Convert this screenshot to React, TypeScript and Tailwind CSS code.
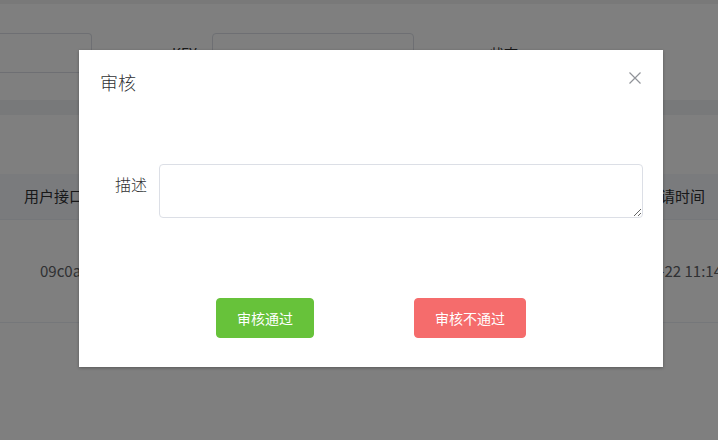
import React from "react";

export default function App() {
  return (
    <div
      className="relative w-[718px] h-[440px] overflow-hidden bg-white text-[#606266]"
      style={{ fontFamily: '"Noto Sans CJK SC", "Noto Sans", sans-serif' }}
    >
      {/* background page */}
      <div className="h-[4px] bg-[#f2f2f2]" />
      <div className="mt-[29px] flex h-[40px] items-center">
        <div className="h-[40px] w-[92px] rounded-r-[4px] border border-l-0 border-[#dcdfe6]" />
        <div className="ml-[80px] w-[40px] text-[14px] leading-[40px] text-[#303133]">KEY</div>
        <div className="h-[40px] w-[202px] rounded-[4px] border border-[#dcdfe6]" />
        <div className="ml-[76px] text-[14px] leading-[40px] text-[#303133]">状态</div>
      </div>
      <div className="mt-[27px] h-[15px] bg-[#f0f2f5]" />
      <div className="mt-[59px] flex h-[46px] items-center justify-between border-b border-[#ebeef5] bg-[#f4f7fb] px-[24px] text-[15px] text-[#303133]">
        <span>用户接口名称</span>
        <span className="-mr-[11px]">申请时间</span>
      </div>
      <div className="flex h-[103px] items-center justify-between border-b border-[#ebeef5] text-[15px] text-[#606266]">
        <span className="ml-[40px]">09c0a1b2c3d4</span>
        <span className="-mr-[4px]">2022-03-22 11:14</span>
      </div>

      {/* overlay */}
      <div className="absolute inset-0 bg-black/50" />

      {/* dialog */}
      <div className="absolute left-[79px] top-[50px] flex h-[317px] w-[584px] flex-col bg-white shadow-[0_1px_3px_rgba(0,0,0,0.3)]">
        <div className="flex items-start justify-between pl-[21px] pr-[22px] pt-[20px]">
          <span className="text-[18px] font-light leading-[24px] text-[#303133]">审核</span>
          <svg width="12" height="12" viewBox="0 0 12 12" className="mt-[2px]">
            <path d="M0.5 0.5 L11.5 11.5 M11.5 0.5 L0.5 11.5" stroke="#909399" strokeWidth="1.2" fill="none" />
          </svg>
        </div>
        <div className="mt-[70px] flex pl-[20px] pr-[20px]">
          <div className="w-[60px] pr-[12px] text-right text-[16px] font-light leading-[40px] text-[#303133]">描述</div>
          <textarea className="h-[54px] w-[484px] resize-y rounded-[4px] border border-[#dcdfe6] px-[15px] py-[5px] text-[14px] outline-none" />
        </div>
        <div className="mt-[80px] flex justify-center gap-[100px]">
          <button className="h-[40px] rounded-[4px] border border-[#67c23a] bg-[#67c23a] px-[20px] text-[14px] font-normal leading-[14px] text-white">
            审核通过
          </button>
          <button className="h-[40px] rounded-[4px] border border-[#f56c6c] bg-[#f56c6c] px-[20px] text-[14px] font-normal leading-[14px] text-white">
            审核不通过
          </button>
        </div>
      </div>
    </div>
  );
}
